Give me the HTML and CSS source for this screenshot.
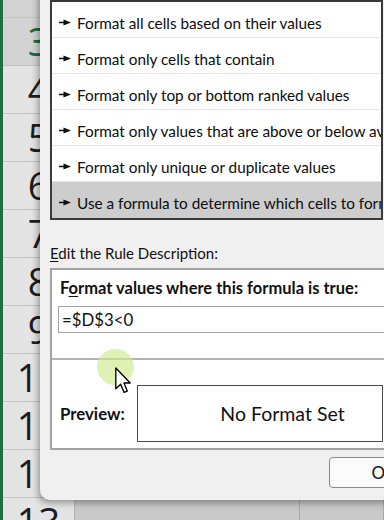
FILE: index.html
```html
<!DOCTYPE html>
<html>
<head>
<meta charset="utf-8">
<link rel="stylesheet" href="styles.css">
</head>
<body>
<div class="screen">
  <div class="sheet">
    <div class="row sel"><div class="hdr"></div><div class="cell"></div><div class="cell last"></div></div>
    <div class="row sel"><div class="hdr">3</div><div class="cell"></div><div class="cell last"></div></div>
    <div class="row"><div class="hdr">4</div><div class="cell"></div><div class="cell last"></div></div>
    <div class="row"><div class="hdr">5</div><div class="cell"></div><div class="cell last"></div></div>
    <div class="row"><div class="hdr">6</div><div class="cell"></div><div class="cell last"></div></div>
    <div class="row"><div class="hdr">7</div><div class="cell"></div><div class="cell last"></div></div>
    <div class="row"><div class="hdr">8</div><div class="cell"></div><div class="cell last"></div></div>
    <div class="row"><div class="hdr">9</div><div class="cell"></div><div class="cell last"></div></div>
    <div class="row"><div class="hdr">10</div><div class="cell"></div><div class="cell last"></div></div>
    <div class="row"><div class="hdr">11</div><div class="cell"></div><div class="cell last"></div></div>
    <div class="row"><div class="hdr">12</div><div class="cell"></div><div class="cell last"></div></div>
    <div class="row"><div class="hdr">13</div><div class="cell"></div><div class="cell last"></div></div>
  </div>

  <div class="dialog">
    <div class="rules">
      <div class="rule"><svg class="bullet" viewBox="0 0 12 7" width="12" height="7"><path d="M0 3.5H6" stroke="#111" stroke-width="1.5"/><polygon points="4.5,0.4 12,3.5 4.5,6.6" fill="#111"/></svg><span>Format all cells based on their values</span></div>
      <div class="rule"><svg class="bullet" viewBox="0 0 12 7" width="12" height="7"><path d="M0 3.5H6" stroke="#111" stroke-width="1.5"/><polygon points="4.5,0.4 12,3.5 4.5,6.6" fill="#111"/></svg><span>Format only cells that contain</span></div>
      <div class="rule"><svg class="bullet" viewBox="0 0 12 7" width="12" height="7"><path d="M0 3.5H6" stroke="#111" stroke-width="1.5"/><polygon points="4.5,0.4 12,3.5 4.5,6.6" fill="#111"/></svg><span>Format only top or bottom ranked values</span></div>
      <div class="rule"><svg class="bullet" viewBox="0 0 12 7" width="12" height="7"><path d="M0 3.5H6" stroke="#111" stroke-width="1.5"/><polygon points="4.5,0.4 12,3.5 4.5,6.6" fill="#111"/></svg><span>Format only values that are above or below average</span></div>
      <div class="rule"><svg class="bullet" viewBox="0 0 12 7" width="12" height="7"><path d="M0 3.5H6" stroke="#111" stroke-width="1.5"/><polygon points="4.5,0.4 12,3.5 4.5,6.6" fill="#111"/></svg><span>Format only unique or duplicate values</span></div>
      <div class="rule active"><svg class="bullet" viewBox="0 0 12 7" width="12" height="7"><path d="M0 3.5H6" stroke="#111" stroke-width="1.5"/><polygon points="4.5,0.4 12,3.5 4.5,6.6" fill="#111"/></svg><span>Use a formula to determine which cells to format</span></div>
    </div>

    <div class="desc-label"><u>E</u>dit the Rule Description:</div>

    <div class="group">
      <div class="group-title">F<u>o</u>rmat values where this formula is true:</div>
      <div class="formula">=$D$3&lt;0</div>
      <div class="sep"></div>
      <div class="preview-row">
        <div class="preview-label">Preview:</div>
        <div class="preview-box">No Format Set</div>
      </div>
    </div>

    <div class="buttons"><div class="btn">OK</div></div>
  </div>

  <div class="click-ring"></div>
  <svg class="cursor" viewBox="0 0 12 20" width="16" height="27">
    <path d="M0.6 0.6 L0.6 16.2 L4.2 12.8 L6.8 18.9 L9.2 17.9 L6.7 11.9 L11.4 11.9 Z" fill="#fff" stroke="#000" stroke-width="1" stroke-linejoin="round"/>
  </svg>
</div>
</body>
</html>
```

FILE: styles.css
```css
html, body {
  margin: 0;
  padding: 0;
}
body {
  width: 384px;
  height: 520px;
  overflow: hidden;
  font-family: Lato, "Open Sans", sans-serif;
  color: #111;
}
.screen {
  position: relative;
  width: 384px;
  height: 520px;
  overflow: hidden;
  background: #cbcbcb;
}
.sheet {
  margin-top: -30px;
  border-left: 3px solid #1f6e3f;
  display: flex;
  flex-direction: column;
}
.row {
  display: flex;
  height: 48px;
  box-sizing: border-box;
  border-bottom: 1px solid #c2c2c2;
}
.hdr {
  width: 72px;
  flex: none;
  box-sizing: border-box;
  border-right: 1px solid #b4b4b4;
  background: #e4e4e4;
  text-align: center;
  font-family: "Open Sans", sans-serif;
  font-size: 38px;
  line-height: 47px;
  color: #1c1c1c;
}
.row.sel .hdr {
  background: #d3d3d3;
  color: #1d6b3a;
}
.cell {
  width: 225px;
  flex: none;
  box-sizing: border-box;
  border-right: 1px solid #a9a9a9;
  background: #c9c9c9;
}
.cell.last {
  flex: 1;
}

/* dialog */
.dialog {
  position: absolute;
  left: 40px;
  top: -10px;
  width: 430px;
  height: 510px;
  box-sizing: border-box;
  padding: 10px 0 0 10px;
  background: #f0f0f0;
  border-radius: 0 0 0 10px;
  box-shadow: -2px 3px 7px rgba(0, 0, 0, 0.35);
  display: flex;
  flex-direction: column;
  align-items: flex-start;
}
.rules {
  width: 333px;
  box-sizing: border-box;
  border: 2px solid #3a3a3a;
  background: #fff;
  overflow: hidden;
}
.rule {
  height: 36px;
  box-sizing: border-box;
  border-bottom: 1px solid #e6e6e6;
  display: flex;
  align-items: flex-start;
  padding: 10px 0 0 7px;
  font-size: 15.3px;
  line-height: 22px;
  white-space: nowrap;
  color: #0c0c0c;
}
.rule:last-child {
  border-bottom: none;
}
.rule.active {
  background: #cdcdcd;
}
.bullet {
  flex: none;
  margin: 7px 6px 0 0;
}
.desc-label {
  margin-top: 23px;
  font-size: 15px;
  line-height: 20px;
  white-space: nowrap;
}
.desc-label u, .group-title u {
  text-underline-offset: 2px;
}
.group {
  margin-top: 5px;
  width: 420px;
  box-sizing: border-box;
  border: 2px solid #a3a3a3;
  background: #fff;
  padding-bottom: 6px;
  display: flex;
  flex-direction: column;
  align-items: flex-start;
}
.group-title {
  margin: 8px 0 0 8px;
  font-weight: 700;
  font-size: 16.5px;
  line-height: 20px;
  white-space: nowrap;
}
.formula {
  margin: 8px 0 0 6px;
  width: 400px;
  height: 27px;
  box-sizing: border-box;
  border: 1px solid #a3a3a3;
  padding-left: 3px;
  font-size: 16.8px;
  line-height: 25px;
}
.sep {
  margin-top: 25px;
  align-self: stretch;
  height: 2px;
  background: #b3b3b3;
}
.preview-row {
  margin-top: 25px;
  display: flex;
  align-items: center;
}
.preview-label {
  width: 77px;
  padding-left: 8px;
  font-weight: 700;
  font-size: 16.8px;
  line-height: 20px;
}
.preview-box {
  width: 246px;
  height: 57px;
  box-sizing: border-box;
  border: 1px solid #4a4a4a;
  background: #fff;
  padding-left: 45px;
  display: flex;
  align-items: center;
  justify-content: center;
  font-size: 19.5px;
  line-height: 24px;
  white-space: nowrap;
}
.buttons {
  margin: 7px 0 0 279px;
}
.btn {
  width: 110px;
  height: 31px;
  box-sizing: border-box;
  border: 1px solid #8a8a8a;
  border-radius: 4px;
  background: #fbfbfb;
  text-align: center;
  font-size: 17px;
  line-height: 29px;
}

/* pointer overlay */
.click-ring {
  position: absolute;
  left: 97px;
  top: 349px;
  width: 37px;
  height: 36px;
  border-radius: 50%;
  background: rgba(206, 234, 140, 0.65);
  filter: blur(0.6px);
}
.cursor {
  position: absolute;
  left: 115px;
  top: 367px;
}
```
